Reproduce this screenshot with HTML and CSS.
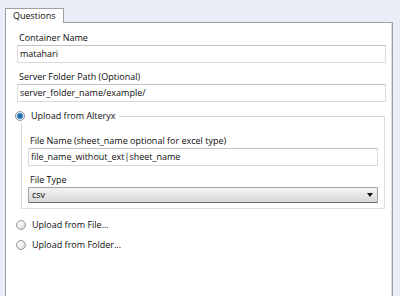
FILE: index.html
```html
<!DOCTYPE html>
<html lang="en">
<head>
    <meta charset="UTF-8">
    <meta name="viewport" content="width=device-width, initial-scale=1.0">
    <title>Questions</title>
    <link rel="stylesheet" href="styles.css">
</head>
<body>
    <div class="tabs">
        <div class="tab">Questions</div>
    </div>
    <div class="panel">
        <div class="label">Container Name</div>
        <div class="field">matahari</div>
        <div class="label">Server Folder Path (Optional)</div>
        <div class="field">server_folder_name/example/</div>

        <fieldset class="group">
            <legend class="option"><span class="radio checked"></span>Upload from Alteryx</legend>
            <div class="label first">File Name (sheet_name optional for excel type)</div>
            <div class="field">file_name_without_ext|sheet_name</div>
            <div class="label">File Type</div>
            <div class="select">csv<span class="arrow"></span></div>
        </fieldset>

        <div class="option single"><span class="radio"></span>Upload from File...</div>
        <div class="option single next"><span class="radio"></span>Upload from Folder...</div>
    </div>
</body>
</html>
```

FILE: styles.css
```css
html, body {
    margin: 0;
    height: 100%;
    overflow: hidden;
}
body {
    background-color: #eaedf8;
    font-family: "Open Sans", "Noto Sans", sans-serif;
    font-size: 9px;
    color: #0d0d0d;
}
.tabs {
    display: flex;
    padding: 8px 0 0 5px;
}
.tab {
    position: relative;
    z-index: 1;
    box-sizing: border-box;
    width: 59px;
    height: 15px;
    margin-bottom: -1px;
    padding-left: 7px;
    line-height: 13px;
    background-color: #fff;
    border: 1px solid #9b9fa6;
    border-bottom: none;
}
.panel {
    display: flex;
    flex-direction: column;
    box-sizing: border-box;
    width: 388px;
    height: 280px;
    margin-left: 5px;
    padding: 8px 6px 0 11px;
    background-color: #fff;
    border: 1px solid #9b9fa6;
    box-shadow: inset -1px 0 0 #dedede;
}
.label {
    padding-left: 2px;
    line-height: 14px;
    margin-top: 7px;
}
.panel > .label:first-child {
    margin-top: 0;
}
.field {
    box-sizing: border-box;
    height: 18px;
    padding-left: 2px;
    line-height: 16px;
    border: 1px solid #dadada;
    border-top-color: #c4c4c4;
    white-space: nowrap;
    overflow: hidden;
}
.group {
    margin: 7px 1px 0 4px;
    padding: 0 6px 5px 6px;
    border: 1px solid #dcdcdc;
    border-top-color: #d6d6d6;
}
.group .label.first {
    margin-top: 11px;
}
.group .label {
    margin-top: 7px;
}
.option {
    display: flex;
    align-items: center;
    line-height: 14px;
    padding: 0 3px 0 0;
}
legend.option {
    margin-left: -13px;
}
.option.single {
    margin: 9px 0 0 -1px;
}
.option.single.next {
    margin-top: 6px;
}
.radio {
    box-sizing: border-box;
    width: 10px;
    height: 10px;
    margin-right: 6px;
    border-radius: 50%;
    border: 1px solid #9a9a9a;
    background: radial-gradient(circle at 40% 35%, #ffffff 0%, #e4e4e4 55%, #cfcfcf 100%);
}
.radio.checked {
    border-color: #8b97a3;
    background: radial-gradient(circle, #1d4f7c 0, #2a78b4 2px, #6aa9d6 3px, #e9eef2 3.6px, #d6dbe0 100%);
}
.select {
    position: relative;
    box-sizing: border-box;
    height: 16px;
    padding-left: 3px;
    line-height: 14px;
    border: 1px solid #a3a3a3;
    border-bottom-color: #6f6f6f;
    border-radius: 1px;
    background: linear-gradient(#f4f4f4, #e6e6e6 50%, #d8d8d8);
}
.arrow {
    position: absolute;
    right: 4px;
    top: 5px;
    width: 0;
    height: 0;
    border-left: 3px solid transparent;
    border-right: 3px solid transparent;
    border-top: 4px solid #111;
}
```
